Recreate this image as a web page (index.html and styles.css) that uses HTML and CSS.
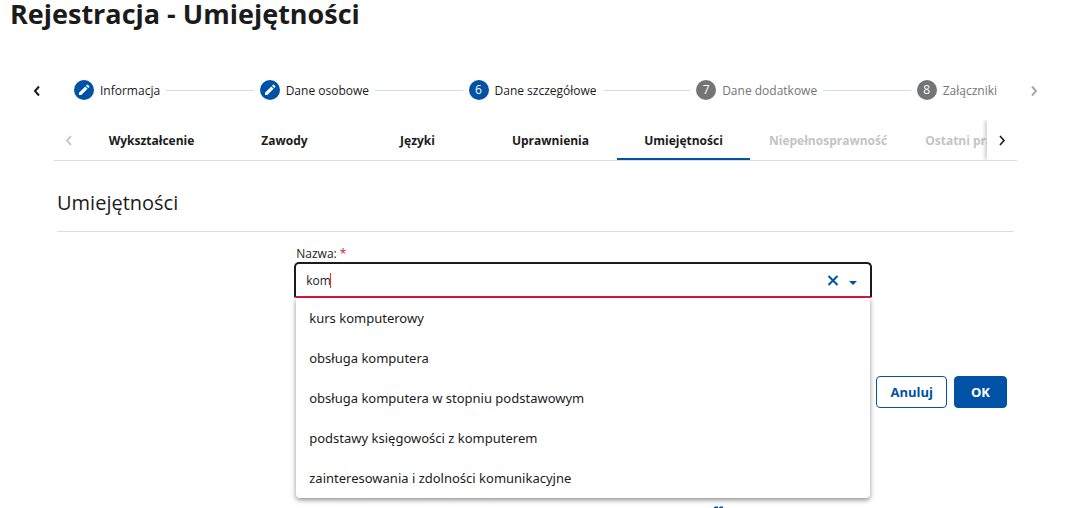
FILE: index.html
```
<!DOCTYPE html>
<html lang="pl">
<head>
<meta charset="utf-8">
<meta name="viewport" content="width=device-width, initial-scale=1">
<title>Rejestracja - Umiejętności</title>
<link rel="stylesheet" href="styles.css">
</head>
<body>
<main class="page">
  <h1 class="page-title">Rejestracja - Umiejętności</h1>

  <nav class="stepper" aria-label="Kroki rejestracji">
    <button class="arrow" type="button" aria-label="Poprzedni krok">
      <svg width="16" height="16" viewBox="0 0 16 16"><path d="M10 4.500L6 9L10 13.500" /></svg>
    </button>
    <ol class="steps">
      <li class="step">
        <span class="step-badge"><svg class="pencil" width="12" height="12" viewBox="0 0 12 12"><path d="M1 11V8.700L7.300 2.400L9.600 4.700L3.300 11ZM8 1.700L9 .7Q9.400 .4 9.800 .7L11.300 2.200Q11.600 2.600 11.300 3L10.300 4Z"/></svg></span>
        <span class="step-label">Informacja</span>
      </li>
      <li class="step-line"></li>
      <li class="step">
        <span class="step-badge"><svg class="pencil" width="12" height="12" viewBox="0 0 12 12"><path d="M1 11V8.700L7.300 2.400L9.600 4.700L3.300 11ZM8 1.700L9 .7Q9.400 .4 9.800 .7L11.300 2.200Q11.600 2.600 11.300 3L10.300 4Z"/></svg></span>
        <span class="step-label">Dane osobowe</span>
      </li>
      <li class="step-line"></li>
      <li class="step" aria-current="step">
        <span class="step-badge">6</span>
        <span class="step-label">Dane szczegółowe</span>
      </li>
      <li class="step-line"></li>
      <li class="step step-pending">
        <span class="step-badge">7</span>
        <span class="step-label">Dane dodatkowe</span>
      </li>
      <li class="step-line"></li>
      <li class="step step-pending">
        <span class="step-badge">8</span>
        <span class="step-label">Załączniki</span>
      </li>
    </ol>
    <button class="arrow arrow-muted" type="button" aria-label="Następny krok">
      <svg width="16" height="16" viewBox="0 0 16 16"><path d="M6 4.500L10 9L6 13.500" /></svg>
    </button>
  </nav>

  <div class="tabs">
    <button class="tab-arrow tab-arrow-muted" type="button" aria-label="Przewiń w lewo" disabled>
      <svg width="16" height="16" viewBox="0 0 16 16"><path d="M10 4L6 8.500L10 13" /></svg>
    </button>
    <div class="tab-list" role="tablist">
      <button class="tab" type="button" role="tab">Wykształcenie</button>
      <button class="tab" type="button" role="tab">Zawody</button>
      <button class="tab" type="button" role="tab">Języki</button>
      <button class="tab" type="button" role="tab">Uprawnienia</button>
      <button class="tab tab-active" type="button" role="tab" aria-selected="true">Umiejętności</button>
      <button class="tab" type="button" role="tab" disabled>Niepełnosprawność</button>
      <button class="tab" type="button" role="tab" disabled>Ostatni pracodawca</button>
    </div>
    <button class="tab-arrow tab-arrow-raised" type="button" aria-label="Przewiń w prawo">
      <svg width="16" height="16" viewBox="0 0 16 16"><path d="M6 4L10 8.500L6 13" /></svg>
    </button>
  </div>

  <section class="section">
    <h2 class="section-title">Umiejętności</h2>
    <form class="form">
      <div class="field">
        <label class="field-label" for="skill">Nazwa: <span class="required">*</span></label>
        <div class="combo">
          <input class="combo-input" id="skill" type="text" value="kom" role="combobox" aria-expanded="true" aria-controls="skill-list" autocomplete="off">
          <span class="caret"></span>
          <button class="combo-button" type="button" aria-label="Wyczyść">
            <svg width="12" height="12" viewBox="0 0 12 12"><path class="cross" d="M1.500 2L10.500 11M10.500 2L1.500 11"/></svg>
          </button>
          <button class="combo-button" type="button" aria-label="Rozwiń">
            <svg width="12" height="12" viewBox="0 0 12 12"><path class="triangle" d="M2 7H10L6 11Z"/></svg>
          </button>
          <ul class="menu" id="skill-list" role="listbox">
            <li class="option" role="option">kurs komputerowy</li>
            <li class="option" role="option">obsługa komputera</li>
            <li class="option" role="option">obsługa komputera w stopniu podstawowym</li>
            <li class="option" role="option">podstawy księgowości z komputerem</li>
            <li class="option" role="option">zainteresowania i zdolności komunikacyjne</li>
          </ul>
        </div>
      </div>
      <div class="actions">
        <button class="button" type="button">Anuluj</button>
        <button class="button button-primary" type="button">OK</button>
      </div>
    </form>
  </section>

  <footer class="footer">
    <svg width="10" height="10" viewBox="0 0 10 10"><path d="M1 .5H4V2H0V1.500ZM6 .5H9V2H5V1.500Z"/></svg>
  </footer>
</main>
</body>
</html>
```
FILE: styles.css
```
* { box-sizing: border-box; }

body {
  margin: 0;
  overflow: hidden;
  background: #fff;
  color: #1b1b1b;
  font-family: "Open Sans", "Noto Sans", sans-serif;
  font-size: 12px;
  line-height: 20px;
}

button, input { font: inherit; color: inherit; }
button { margin: 0; padding: 0; border: 0; background: none; }
svg { display: block; }
ol, ul { margin: 0; padding: 0; list-style: none; }

.page-title {
  margin: 0;
  padding-left: 10px;
  font-size: 27px;
  line-height: 28px;
  font-weight: 700;
}

.stepper {
  display: flex;
  align-items: center;
  margin: 52px 30px 0 29px;
}

.arrow svg, .tab-arrow svg { fill: none; stroke: currentColor; stroke-width: 2; }
.arrow-muted { color: #aaa; }

.steps {
  display: flex;
  flex: 1;
  align-items: center;
  gap: 6px;
  margin: 0 29px;
}

.step { display: flex; align-items: center; gap: 6px; white-space: nowrap; }
.step-label { padding-top: 2px; line-height: 18px; }

.step-badge {
  display: flex;
  align-items: center;
  justify-content: center;
  width: 20px;
  height: 20px;
  border-radius: 50%;
  background: #0052a5;
  color: #fff;
}

.pencil { fill: #fff; }
.step-pending { color: #757575; }
.step-pending .step-badge { background: #757575; }
.step-line { flex: 1; height: 1px; background: #dcdcdc; }

.tabs {
  display: flex;
  height: 41px;
  margin: 20px 55px 0 54px;
  border-bottom: 1px solid #dcdcdc;
}

.tab-arrow {
  display: flex;
  flex: none;
  align-items: center;
  justify-content: center;
  width: 30px;
}

.tab-arrow-muted { color: #bdbdbd; }
.tab-arrow-raised { background: #fff; box-shadow: -2px 0 4px rgba(0, 0, 0, .2); clip-path: inset(0 0 0 -8px); }
.tab-arrow-muted svg, .tab-arrow-raised svg { stroke-width: 1.6; }

.tab-list { display: flex; flex: 1; min-width: 0; padding-left: 1px; overflow: hidden; }

.tab {
  flex: none;
  min-width: 133px;
  padding: 4px 19px 0;
  border-bottom: 2px solid transparent;
  font-weight: 700;
  white-space: nowrap;
}

.tab:disabled { color: #c4c4c4; }
.tab-active { border-color: #0052a5; }

.section { margin: 28px 58px 0 57px; }

.section-title {
  margin: 0;
  padding-bottom: 14px;
  border-bottom: 1px solid #dcdcdc;
  font-size: 20px;
  line-height: 28px;
  font-weight: 400;
}

.form { padding-top: 13px; }
.field { width: 60%; margin-left: 25%; }
.field-label { display: block; line-height: 17px; }
.required { color: #d3173c; }

.combo {
  position: relative;
  display: flex;
  align-items: center;
  gap: 8px;
  height: 36px;
  margin: 0 -2px;
  padding: 0 11px 0 10px;
  border: 2px solid #1b1b1b;
  border-bottom-color: #d3173c;
  border-radius: 5px 5px 2px 2px;
}

.combo-input {
  flex: 1;
  min-width: 0;
  padding: 2px 0 0;
  border: 0;
  outline: 0;
  background: none;
}

.caret {
  position: absolute;
  left: 34px;
  top: 9px;
  z-index: 1;
  width: 1px;
  height: 15px;
  background: #f03020;
}

.cross { fill: none; stroke: #0052a5; stroke-width: 2; }
.triangle { fill: #0052a5; }

.menu {
  position: absolute;
  top: 100%;
  left: 0;
  right: 0;
  margin-top: 2px;
  border-radius: 0 0 4px 4px;
  background: #fff;
  box-shadow: 0 2px 5px rgba(0, 0, 0, .45);
  clip-path: inset(0 -10px -10px -10px);
}

.option {
  padding: 0 13px;
  font-family: "Noto Sans", "Open Sans", sans-serif;
  font-size: 13px;
  line-height: 40px;
}

.actions {
  display: flex;
  justify-content: flex-end;
  gap: 7px;
  padding: 78px 7px 0 0;
}

.button {
  height: 32px;
  padding: 0 13px;
  border: 1px solid #0052a5;
  border-radius: 4px;
  color: #0052a5;
  font-size: 13px;
  font-weight: 700;
}

.button-primary { padding: 0 16px; background: #0052a5; color: #fff; }

.footer { display: flex; justify-content: center; padding: 98px 0 0 365px; }
.footer svg { fill: #0052a5; }
```
